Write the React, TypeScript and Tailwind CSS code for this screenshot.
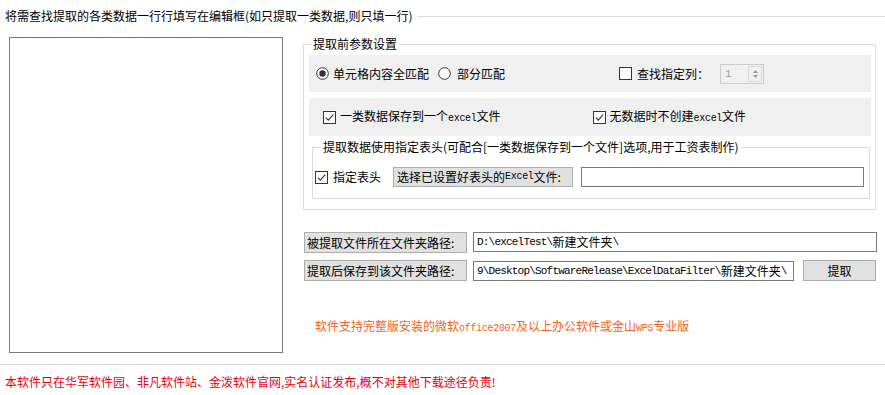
import React from "react";

const CJK = "font-['Noto_Sans_CJK_SC','Noto_Sans',sans-serif]";
const MONO = "font-['Liberation_Mono','DejaVu_Sans_Mono',monospace]";

function Radio({ checked }: { checked?: boolean }) {
  return (
    <svg width="13" height="13" viewBox="0 0 13 13" className="shrink-0">
      <circle cx="6.5" cy="6.5" r="5.8" fill="#fff" stroke="#333" strokeWidth="1" />
      {checked && <circle cx="6.5" cy="6.5" r="3.2" fill="#333" />}
    </svg>
  );
}

function Check({ checked }: { checked?: boolean }) {
  return (
    <svg width="13" height="13" viewBox="0 0 13 13" className="shrink-0">
      <rect x="0.5" y="0.5" width="12" height="12" fill="#fff" stroke="#333" strokeWidth="1" />
      {checked && (
        <path d="M2.8 6.6 L5.3 9.1 L10.2 3.6" fill="none" stroke="#333" strokeWidth="1.1" />
      )}
    </svg>
  );
}

function M({ children }: { children: React.ReactNode }) {
  return <span className={`${MONO} text-[10px] tracking-[-0.3px]`}>{children}</span>;
}

export default function App() {
  return (
    <div className={`w-[885px] h-[395px] bg-white text-black text-[12px] leading-[16px] ${CJK} overflow-hidden flex flex-col`}>
      {/* header */}
      <div className="h-[32px] flex items-center pl-[5px] shrink-0">
        <span className="whitespace-nowrap">将需查找提取的各类数据一行行填写在编辑框(如只提取一类数据,则只填一行)</span>
        <div className="flex-1 h-px bg-[#dcdcdc] ml-[5px]" />
      </div>

      {/* main */}
      <div className="h-[332px] flex shrink-0">
        <div className="ml-[9px] mt-[5px] w-[274px] h-[316px] border border-[#7a7a7a] bg-white shrink-0" />

        <div className="ml-[20px] flex flex-col">
          <fieldset className="mt-[4px] w-[573px] border border-[#dcdcdc] p-0 pb-[10px] pr-[4px] pl-[5px]">
            <legend className="ml-[2px] px-[2px] leading-[16px] whitespace-nowrap">提取前参数设置</legend>

            <div className="mt-[3px] h-[37px] bg-[#f0f0f0] flex items-center pl-[7px]">
              <Radio checked />
              <span className="ml-[4px]">单元格内容全匹配</span>
              <span className="ml-[9px]"><Radio /></span>
              <span className="ml-[6px]">部分匹配</span>
              <span className="ml-[114px]"><Check /></span>
              <span className="ml-[5px]">查找指定列：</span>
              <div className="ml-[11px] w-[44px] h-[20px] border border-[#cccccc] flex items-stretch">
                <span className={`flex-1 pl-[4px] ${MONO} text-[11px] leading-[18px] text-[#a0a0a0]`}>1</span>
                <div className="w-[14px] my-[1px] mr-[1px] border border-[#dadada] flex flex-col items-center justify-center gap-[2px]">
                  <svg width="5" height="3" viewBox="0 0 5 3"><path d="M0 3 L2.5 0 L5 3Z" fill="#9a9a9a" /></svg>
                  <svg width="5" height="3" viewBox="0 0 5 3"><path d="M0 0 L2.5 3 L5 0Z" fill="#9a9a9a" /></svg>
                </div>
              </div>
            </div>

            <div className="mt-[6px] h-[38px] bg-[#f0f0f0] flex items-center pl-[14px]">
              <Check checked />
              <span className="ml-[4px] whitespace-nowrap">一类数据保存到一个<M>excel</M>文件</span>
              <span className="ml-[92px]"><Check checked /></span>
              <span className="ml-[4px] whitespace-nowrap">无数据时不创建<M>excel</M>文件</span>
            </div>

            <fieldset className="mt-[3px] ml-[3px] mr-[1px] border border-[#dcdcdc] p-0 pt-[12px] pb-[11px] pl-[2px]">
              <legend className="ml-[6px] px-[2px] leading-[16px] whitespace-nowrap">提取数据使用指定表头(可配合[一类数据保存到一个文件]选项,用于工资表制作)</legend>
              <div className="h-[20px] flex items-center">
                <Check checked />
                <span className="ml-[5px]">指定表头</span>
                <div className="ml-[12px] w-[180px] h-[20px] bg-[#e1e1e1] border border-[#adadad] flex items-center pl-[3px] whitespace-nowrap">
                  选择已设置好表头的<M>Excel</M>文件:
                </div>
                <div className="ml-[8px] w-[283px] h-[20px] border border-[#7a7a7a] bg-white" />
              </div>
            </fieldset>
          </fieldset>

          <div className="mt-[22px] ml-[1px] flex items-start">
            <div className="w-[163px] h-[21px] bg-[#e1e1e1] border border-[#adadad] flex items-center pl-[2px] whitespace-nowrap">
              被提取文件所在文件夹路径:
            </div>
            <div className="ml-[6px] w-[404px] h-[20px] border border-[#7a7a7a] bg-white flex items-center pl-[3px] overflow-hidden whitespace-nowrap">
              <span className={`${MONO} text-[11px] tracking-[-0.8px]`}>D:\excelTest\</span>
              <span>新建文件夹</span>
              <span className={`${MONO} text-[11px] tracking-[-0.8px]`}>\</span>
            </div>
          </div>

          <div className="mt-[7px] ml-[1px] flex items-center">
            <div className="w-[163px] h-[21px] bg-[#e1e1e1] border border-[#adadad] flex items-center pl-[2px] whitespace-nowrap">
              提取后保存到该文件夹路径:
            </div>
            <div className="ml-[6px] w-[321px] h-[20px] border border-[#7a7a7a] bg-white flex items-center pl-[3px] overflow-hidden whitespace-nowrap">
              <span className={`${MONO} text-[11px] tracking-[-0.8px]`}>9\Desktop\SoftwareRelease\ExcelDataFilter\</span>
              <span>新建文件夹</span>
              <span className={`${MONO} text-[11px] tracking-[-0.8px]`}>\</span>
            </div>
            <div className="ml-[9px] w-[73px] h-[21px] bg-[#e1e1e1] border border-[#adadad] flex items-center justify-center">
              提取
            </div>
          </div>

          <div className="mt-[37px] ml-[12px] text-[#f0641e] whitespace-nowrap">
            软件支持完整版安装的微软<M>office2007</M>及以上办公软件或金山<M>WPS</M>专业版
          </div>
        </div>
      </div>

      {/* footer */}
      <div className="border-t border-[#dcdcdc] pt-[9px] pl-[5px] text-[#e6000f] whitespace-nowrap">
        本软件只在华军软件园、非凡软件站、金泼软件官网,实名认证发布,概不对其他下载途径负责!
      </div>
    </div>
  );
}
